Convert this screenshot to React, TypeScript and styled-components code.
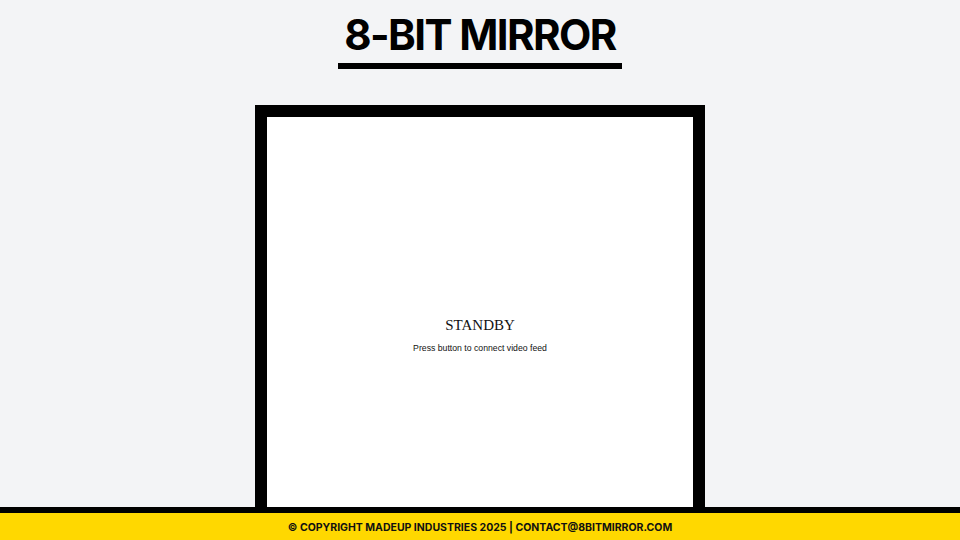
import React from "react";
import styled, { createGlobalStyle } from "styled-components";

const Global = createGlobalStyle`
  html, body { margin: 0; padding: 0; background: #f3f4f6; }
  body { font-family: Inter, "Liberation Sans", sans-serif; overflow: hidden; }
`;

const Page = styled.div`
  min-height: 100vh;
  display: flex;
  flex-direction: column;
  align-items: center;
`;

const Header = styled.header`
  display: flex;
  justify-content: center;
  padding-top: 12px;
`;

const Title = styled.h1`
  margin: 0;
  padding: 0 6px 6px;
  font-family: Inter, "Liberation Sans", sans-serif;
  font-weight: 700;
  font-size: 42px;
  line-height: 45px;
  letter-spacing: -1.6px;
  color: #000;
  border-bottom: 6px solid #000;
`;

const Main = styled.main`
  display: flex;
  justify-content: center;
  padding-top: 36px;
`;

const Frame = styled.div`
  width: 426px;
  height: 416px;
  padding-top: 10px;
  border: 12px solid #000;
  background: #fff;
  display: flex;
  flex-direction: column;
  align-items: center;
  justify-content: center;
  box-sizing: content-box;
`;

const Standby = styled.div`
  font-family: "Liberation Serif", serif;
  font-size: 15px;
  color: #111;
  letter-spacing: 0px;
`;

const Hint = styled.div`
  font-family: "Liberation Sans", Arial, sans-serif;
  font-size: 8.7px;
  color: #111;
  margin-top: 9px;
`;

const Footer = styled.footer`
  position: fixed;
  left: 0;
  right: 0;
  bottom: 0;
  border-top: 6px solid #000;
  background: #ffd800;
  display: flex;
  align-items: center;
  justify-content: center;
  font-family: Inter, "Liberation Sans", sans-serif;
  font-weight: 700;
  font-size: 10.5px;
  color: #111;
  padding-top: 1px;
  box-sizing: border-box;
  height: 33px;
`;

export default function App() {
  return (
    <>
      <Global />
      <Page>
        <Header>
          <Title>8-BIT MIRROR</Title>
        </Header>
        <Main>
          <Frame>
            <Standby>STANDBY</Standby>
            <Hint>Press button to connect video feed</Hint>
          </Frame>
        </Main>
      </Page>
      <Footer>© COPYRIGHT MADEUP INDUSTRIES 2025 | CONTACT@8BITMIRROR.COM</Footer>
    </>
  );
}
